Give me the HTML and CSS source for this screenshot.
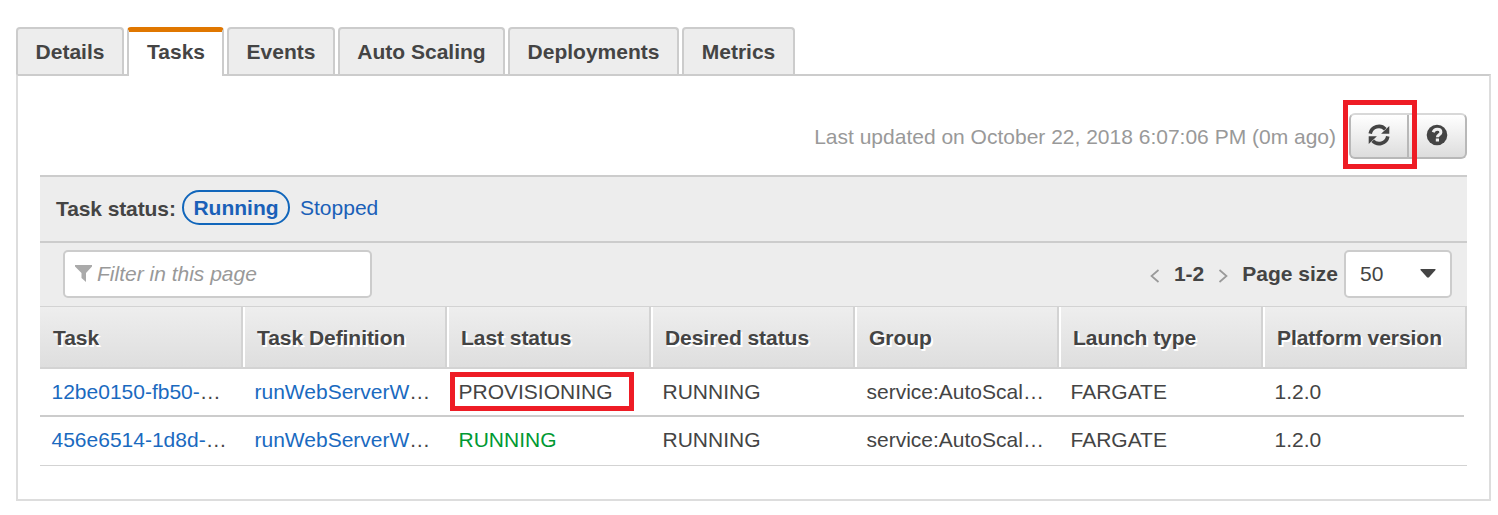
FILE: index.html
```html
<!DOCTYPE html>
<html lang="en">
<head>
<meta charset="utf-8">
<title>Tasks</title>
<link rel="stylesheet" href="styles.css">
</head>
<body>
<nav class="tabs">
  <a class="tab tab-details">Details</a>
  <a class="tab tab-tasks active">Tasks</a>
  <a class="tab tab-events">Events</a>
  <a class="tab tab-scaling">Auto Scaling</a>
  <a class="tab tab-deployments">Deployments</a>
  <a class="tab tab-metrics">Metrics</a>
</nav>
<main class="panel">
  <div class="toolbar">
    <span class="updated">Last updated on October 22, 2018 6:07:06 PM (0m ago)</span>
    <div class="btn-group">
      <button class="btn btn-refresh" aria-label="Refresh">
        <svg width="22" height="22" viewBox="0 0 22 22"><path d="M2.200 9.600A8.800 8.800 0 0 1 17.300 5.200M19.800 12.400A8.800 8.800 0 0 1 4.700 16.800" fill="none" stroke="#444" stroke-width="3.600"/><path d="M21.300 2v7.800h-8.200zM.7 20v-7.800h8.200z" fill="#444"/></svg>
        <span class="highlight highlight-refresh"></span>
      </button>
      <button class="btn btn-help" aria-label="Help">
        <svg width="22" height="22" viewBox="0 0 22 22"><circle cx="11" cy="11" r="10.300" fill="#444"/><path d="M7.200 8.200C8 6 9.300 5.300 11.200 5.300c2.200 0 3.700 1.200 3.700 2.900 0 2.600-3.500 2.500-3.500 5" fill="none" stroke="#efefef" stroke-width="3"/><path d="M9.800 14.500h3.200v3h-3.200z" fill="#efefef"/></svg>
      </button>
    </div>
  </div>
  <section class="status-bar">
    <span class="status-label">Task status:</span>
    <a class="pill">Running</a>
    <a class="stopped">Stopped</a>
  </section>
  <section class="filter-bar">
    <div class="filter">
      <svg width="17" height="17" viewBox="0 0 17 17"><path d="M0 0h17v1.500l-6 6.500v9l-4.500-4V8L0 1.500z" fill="#aaa"/></svg>
      <span>Filter in this page</span>
    </div>
    <div class="pager">
      <svg class="chev" width="10" height="14" viewBox="0 0 10 14"><path d="M8.500 1L1.500 7l7 6" fill="none" stroke="#999" stroke-width="1.700"/></svg>
      <b class="range">1-2</b>
      <svg class="chev" width="10" height="14" viewBox="0 0 10 14"><path d="M1.500 1l7 6-7 6" fill="none" stroke="#999" stroke-width="1.700"/></svg>
      <b class="size-label">Page size</b>
      <div class="select"><span>50</span><svg width="16" height="9" viewBox="0 0 16 9"><path d="M1 0h14q1 0 .5 1L9 8.300q-1 .9-2 0L.5 1Q0 0 1 0z" fill="#444"/></svg></div>
    </div>
  </section>
  <div class="grid head">
    <div>Task</div><div>Task Definition</div><div>Last status</div><div>Desired status</div><div>Group</div><div>Launch type</div><div>Platform version</div>
  </div>
  <div class="grid row">
    <div><a>12be0150-fb50-</a>…</div><div><a>runWebServerW</a>…</div><div class="marked">PROVISIONING<span class="highlight highlight-status"></span></div><div>RUNNING</div><div>service:AutoScal…</div><div>FARGATE</div><div>1.2.0</div>
  </div>
  <div class="grid row last">
    <div><a>456e6514-1d8d-</a>…</div><div><a>runWebServerW</a>…</div><div class="ok">RUNNING</div><div>RUNNING</div><div>service:AutoScal…</div><div>FARGATE</div><div>1.2.0</div>
  </div>
</main>
</body>
</html>
```
FILE: styles.css
```css
* { box-sizing: border-box; }
body {
  margin: 0;
  padding: 27px 7px 0 16px;
  background: #fff;
  color: #444;
  font: 21px/24px "Liberation Sans", Arial, sans-serif;
}
.tabs { display: flex; gap: 3px; height: 47px; }
.tab {
  height: 47px;
  padding-top: 11px;
  border: 2px solid #ccc;
  border-bottom: 0;
  border-radius: 4px 4px 0 0;
  background: #ededed;
  font-weight: bold;
  text-align: center;
  white-space: nowrap;
}
.tab-details { width: 108px; }
.tab-tasks { width: 97px; }
.tab-events { width: 108px; }
.tab-scaling { width: 167px; }
.tab-deployments { width: 171px; }
.tab-metrics { width: 113px; }
.tab.active {
  position: relative;
  height: 49px;
  padding: 8px 0 0 1px;
  border-top: 5px solid #e07700;
  background: #fff;
}
.panel {
  height: 427px;
  padding: 0 22px;
  border: 2px solid #ddd;
  border-top-color: #ccc;
}
.toolbar {
  display: flex;
  justify-content: flex-end;
  height: 99px;
  padding-top: 37px;
}
.updated { margin: 12px 13px 0 0; color: #999; white-space: nowrap; }
.btn-group {
  display: flex;
  width: 118px;
  height: 46px;
  border: 2px solid #b8b8b8;
  border-top-color: #d8d8d8;
  border-radius: 6px;
  background: linear-gradient(#fff, #ddd);
}
.btn {
  display: flex;
  justify-content: center;
  padding: 9px 0 0;
  border: 0;
  background: none;
}
.btn-refresh { position: relative; width: 58px; border-right: 2px solid #b8b8b8; }
.btn-help { width: 57px; }
.highlight { position: absolute; border: 5px solid #ee1c25; }
.highlight-refresh { left: -8px; top: -15px; width: 74px; height: 69px; }
.highlight-status { left: 3px; top: 3px; width: 184px; height: 39px; }
.status-bar {
  display: flex;
  height: 66px;
  padding: 13px 16px 0;
  border-top: 2px solid #ccc;
  background: #ededed;
}
.status-label { margin-top: 7px; width: 126px; font-weight: bold; letter-spacing: -0.1px; }
.pill {
  width: 108px;
  height: 35px;
  padding-top: 4px;
  border: 2px solid #1166bb;
  border-radius: 18px;
  color: #1a60b8;
  font-weight: bold;
  text-align: center;
}
.stopped { margin: 6px 0 0 10px; color: #1a60b8; }
.filter-bar {
  display: flex;
  justify-content: space-between;
  height: 65px;
  padding: 7px 15px 0 23px;
  border-top: 2px solid #ccc;
  background: #ededed;
}
.filter {
  display: flex;
  gap: 5px;
  width: 309px;
  height: 48px;
  padding: 10px 10px 0;
  border: 2px solid #ccc;
  border-radius: 5px;
  background: #fff;
  color: #999;
  font-style: italic;
}
.filter svg { margin-top: 3px; }
.pager { display: flex; }
.chev { margin-top: 19px; }
.range { margin: 12px 14px 0; }
.size-label { margin: 12px 6px 0 14px; }
.select {
  display: flex;
  justify-content: space-between;
  width: 108px;
  height: 48px;
  padding: 10px 14px 0;
  border: 2px solid #ccc;
  border-radius: 5px;
  background: #fff;
}
.select svg { margin-top: 7px; }
.grid { display: grid; grid-template-columns: 203px repeat(6, 204px); }
.head {
  height: 63px;
  border-top: 1px solid #d3d3d3;
  border-bottom: 2px solid #d3d3d3;
  background: linear-gradient(#eee, #dedede);
  font-weight: bold;
  letter-spacing: -0.05px;
  text-shadow: 1px 2px 0 #fff, 2px 2px 0 #fff;
}
.head > div {
  padding: 19px 0 0 12px;
  border-left: 2px solid #fff;
  border-right: 2px solid #d3d3d3;
}
.head > div:first-child { padding-left: 13px; border-left: 0; }
.row {
  width: 1424px;
  height: 48px;
  border-bottom: 2px solid #ccc;
}
.row > div { padding: 11px 0 0 11.5px; white-space: nowrap; }
.row a { color: #1a6abf; }
.row .ok { color: #009933; }
.row .marked { position: relative; }
.row.last { width: 1427px; height: 49px; border-bottom: 1px solid #d3d3d3; }
```
